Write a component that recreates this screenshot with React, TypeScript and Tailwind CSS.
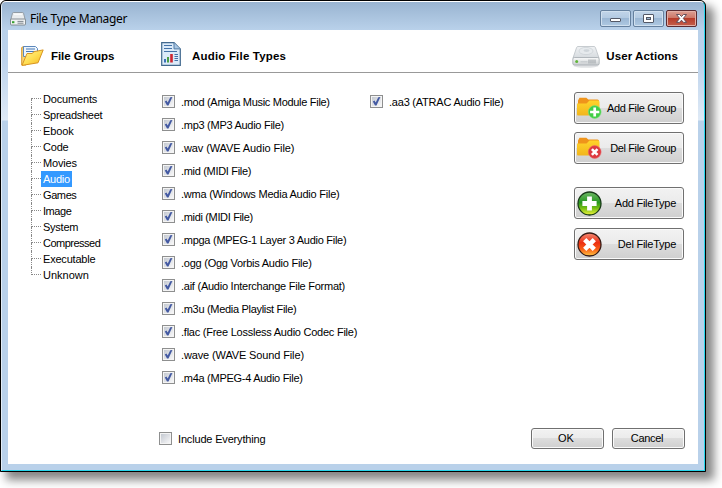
import React from "react";

const groups: [string, string][] = [
  ["Documents", "tracking-[-0.17px]"],
  ["Spreadsheet", "tracking-[-0.28px]"],
  ["Ebook", "tracking-[-0.1px]"],
  ["Code", "tracking-[-0.2px]"],
  ["Movies", "tracking-[-0.15px]"],
  ["Audio", "tracking-[-0.25px]"],
  ["Games", "tracking-[-0.4px]"],
  ["Image", "tracking-[-0.45px]"],
  ["System", "tracking-[-0.25px]"],
  ["Compressed", "tracking-[-0.5px]"],
  ["Executable", "tracking-[-0.2px]"],
  ["Unknown", "tracking-[0px]"],
];

const types: [string, string][] = [
  [".mod (Amiga Music Module File)", "tracking-[-0.3px]"],
  [".mp3 (MP3 Audio File)", "tracking-[-0.28px]"],
  [".wav (WAVE Audio File)", "tracking-[-0.1px]"],
  [".mid (MIDI File)", "tracking-[-0.32px]"],
  [".wma (Windows Media Audio File)", "tracking-[-0.23px]"],
  [".midi (MIDI File)", "tracking-[-0.34px]"],
  [".mpga (MPEG-1 Layer 3 Audio File)", "tracking-[-0.27px]"],
  [".ogg (Ogg Vorbis Audio File)", "tracking-[-0.25px]"],
  [".aif (Audio Interchange File Format)", "tracking-[-0.25px]"],
  [".m3u (Media Playlist File)", "tracking-[-0.31px]"],
  [".flac (Free Lossless Audio Codec File)", "tracking-[-0.24px]"],
  [".wave (WAVE Sound File)", "tracking-[-0.13px]"],
  [".m4a (MPEG-4 Audio File)", "tracking-[-0.28px]"],
];

function Check({ checked = true }: { checked?: boolean }) {
  return (
    <svg width="13" height="13" viewBox="0 0 13 13" className="shrink-0">
      <defs>
        <linearGradient id="box" x1="0" y1="0" x2="1" y2="1">
          <stop offset="0" stopColor="#c4c9d1" />
          <stop offset="1" stopColor="#f7f7f8" />
        </linearGradient>
      </defs>
      <rect x=".5" y=".5" width="12" height="12" fill="#f4f4f4" stroke="#8e8f8f" />
      <rect x="2" y="2" width="9" height="9" fill="url(#box)" />
      {checked && <path d="M2.8 6.4 4.5 5.5 5.7 7.5 8.3 2.3 10.4 2 6.5 10.5 5 10.5Z" fill="#4359a2" />}
    </svg>
  );
}

function TypeRow({ label, tracking }: { label: string; tracking: string }) {
  return (
    <div className="flex h-[23px] items-center">
      <Check />
      <span className={"ml-[6px] whitespace-nowrap pt-[2px] " + tracking}>{label}</span>
    </div>
  );
}

function SmallDrive() {
  return (
    <svg width="16" height="15" viewBox="0 0 16 15">
      <path d="M3.4 1.5h9.2q.7 0 .9.7L15.3 9H.7L2.5 2.2q.2-.7.9-.7Z" fill="#e9ecee" stroke="#8b949c" strokeWidth=".9" />
      <path d="M4 3.2h8" stroke="#fff" />
      <rect x=".5" y="8" width="15" height="6" rx="1" fill="#f0f2f3" stroke="#7b848b" strokeWidth=".9" />
      <rect x="2" y="10.2" width="2.4" height="2" fill="#35a02e" />
      <path d="M7.5 10.4h6M7.5 12.2h6" stroke="#7d868d" />
    </svg>
  );
}

function Drive() {
  return (
    <svg width="28" height="24" viewBox="0 0 28 24">
      <defs>
        <linearGradient id="driveTop" x1="0" y1="0" x2="0" y2="1">
          <stop offset="0" stopColor="#f0f2f4" />
          <stop offset="1" stopColor="#d6dbdf" />
        </linearGradient>
        <linearGradient id="driveFront" x1="0" y1="0" x2="0" y2="1">
          <stop offset="0" stopColor="#fafbfb" />
          <stop offset="1" stopColor="#c9cdd0" />
        </linearGradient>
      </defs>
      <ellipse cx="14" cy="20.8" rx="12.5" ry="2" fill="#e0e2e4" />
      <path d="M6 1.5h16q1 0 1.4 1L27 13H1L4.6 2.5Q5 1.5 6 1.5Z" fill="url(#driveTop)" stroke="#bac0c5" strokeWidth=".8" />
      <ellipse cx="14" cy="6" rx="7" ry="3.6" fill="#e6eaed" stroke="#c5cbd0" strokeWidth=".6" />
      <ellipse cx="14.5" cy="5.6" rx="3" ry="1.3" fill="#cfd5da" />
      <rect x=".8" y="12.5" width="26.4" height="7.5" rx="1.5" fill="url(#driveFront)" stroke="#a5abb0" strokeWidth=".8" />
      <circle cx="4.7" cy="16.5" r="1.5" fill="#62b53a" />
      <path d="M8.5 16.8h7" stroke="#b9bec1" strokeWidth=".8" />
      <path d="M17 14.5v4M19 14.5v4M21 14.5v4M23 14.5v4" stroke="#a1a7ab" strokeWidth="1.1" />
    </svg>
  );
}

function OpenFolder() {
  return (
    <svg width="23" height="22" viewBox="0 0 23 22">
      <defs>
        <linearGradient id="flap" x1="0" y1="0" x2="1" y2="1">
          <stop offset="0" stopColor="#fff2a0" />
          <stop offset=".5" stopColor="#ffdf55" />
          <stop offset="1" stopColor="#f5b51d" />
        </linearGradient>
      </defs>
      <path d="M.7 2.5 3 1.3 5 2.5V20H.7Z" fill="#fbd673" stroke="#d69732" />
      <path d="M2.5 1.5h12l2 2v8h-14z" fill="#edf5fc" stroke="#5c88bd" />
      <path d="M5 4h9M5 6.5h9" stroke="#4678b5" strokeWidth="1.2" />
      <path d="M1 20.4 6 8.5h5L13 6.7l9.2-1.8L17 17.8Z" fill="url(#flap)" stroke="#d99520" strokeLinejoin="round" />
    </svg>
  );
}

function Report() {
  return (
    <svg width="20" height="24" viewBox="0 0 20 24">
      <path d="M.7.7H13l6.3 6.2v16.4H.7Z" fill="#dcebf9" stroke="#42698e" strokeWidth="1.2" />
      <path d="M13 .7v6.2h6.3" fill="#a9c7e4" stroke="#557da5" />
      <path d="M3 3.5h8M3 6.5h8M3 9.5h13" stroke="#4472a8" strokeWidth="1.1" />
      <path d="M13.5 12.5H17M13.5 14.5H17M13.5 16.5H17M13.5 18.5H17" stroke="#4472a8" />
      <rect x="3" y="17" width="2" height="3.5" fill="#3b70b6" />
      <rect x="6" y="15" width="2" height="5.5" fill="#4a9e45" />
      <rect x="9.2" y="12" width="2.6" height="8.5" fill="#cf2731" />
    </svg>
  );
}

function FolderBadge({ del = false }: { del?: boolean }) {
  return (
    <svg width="25" height="24" viewBox="0 0 25 24" className="shrink-0">
      <defs>
        <linearGradient id="folder" x1="0" y1="0" x2="0" y2="1">
          <stop offset="0" stopColor="#ffd42b" />
          <stop offset="1" stopColor="#f2b51d" />
        </linearGradient>
      </defs>
      <path d="M1 4.5 2.5 1.7h6.8l2 1.8h9.2q1.5 0 1.5 1.5V12H1Z" fill="#ef941b" />
      <path d="M0 7.5h9.5l3-3H21q1.5 0 1.5 1.5v12.5q0 1-1 1H1q-1 0-1-1Z" fill="url(#folder)" />
      <circle cx="17.7" cy="16" r="6.4" fill={del ? "#dd3a40" : "#42cd46"} stroke={del ? "#ed686b" : "#7be37c"} strokeWidth=".6" />
      {del ? (
        <path d="m14.9 13.2 5.6 5.6m0-5.6-5.6 5.6" stroke="#fff" strokeWidth="2.6" />
      ) : (
        <path d="M17.7 11.4v9.2M13.1 16h9.2" stroke="#fff" strokeWidth="2.7" />
      )}
    </svg>
  );
}

function RoundBadge({ del = false }: { del?: boolean }) {
  return (
    <svg width="25" height="25" viewBox="0 0 25 25" className="shrink-0">
      <defs>
        <linearGradient id="greenBall" x1="0" y1="0" x2="0" y2="1">
          <stop offset="0" stopColor="#6fb968" />
          <stop offset=".45" stopColor="#269620" />
          <stop offset=".7" stopColor="#75bd12" />
          <stop offset="1" stopColor="#eff53d" />
        </linearGradient>
        <linearGradient id="redBall" x1="0" y1="0" x2="0" y2="1">
          <stop offset="0" stopColor="#f48b75" />
          <stop offset=".42" stopColor="#ec2f12" />
          <stop offset=".7" stopColor="#f85d16" />
          <stop offset="1" stopColor="#ffc442" />
        </linearGradient>
      </defs>
      <circle cx="12.5" cy="12.5" r="11.5" fill={del ? "url(#redBall)" : "url(#greenBall)"} stroke={del ? "#361b16" : "#183a19"} strokeWidth="1.3" />
      {del ? (
        <path d="m7.7 7.7 9.6 9.6m0-9.6-9.6 9.6" stroke="#fff" strokeWidth="4.6" />
      ) : (
        <path d="M12.5 5.4v14.2M5.4 12.5h14.2" stroke="#fff" strokeWidth="4.8" />
      )}
    </svg>
  );
}

const buttonFace =
  "rounded-[3px] border border-[#707070] bg-[linear-gradient(#f2f2f2_0%,#ebebeb_49%,#dddddd_50%,#cfcfcf_100%)] shadow-[inset_0_0_0_1px_#fafafa]";

function ActionButton({ label, icon, text }: { label: string; icon: React.ReactNode; text: string }) {
  return (
    <button className={"flex h-8 w-[110px] items-center justify-between pl-[2px] pr-[7px] " + buttonFace}>
      {icon}
      <span className={"whitespace-nowrap " + text}>{label}</span>
    </button>
  );
}

function Caption({ kind }: { kind: "min" | "max" | "close" }) {
  const face =
    kind === "close"
      ? "border-[#5b2b31] bg-[linear-gradient(#dca094_0%,#ce7767_46%,#b73c2a_50%,#c4604c_100%)] shadow-[inset_0_0_0_1px_#e3afa5]"
      : "border-[#65809e] bg-[linear-gradient(#c2d5e9_0%,#b3cae2_46%,#9bb7d4_50%,#afc9e2_100%)] shadow-[inset_0_0_0_1px_#d0e0ef]";
  return (
    <div className={"flex h-[17px] w-[31px] items-center justify-center rounded-[2px] border " + face}>
      <svg width="13" height="11" viewBox="0 0 13 11">
        {kind === "min" && <rect x="1.5" y="5.5" width="10" height="3" rx=".5" fill="#fff" stroke="#535866" />}
        {kind === "max" && (
          <>
            <rect x="1.5" y="1.5" width="10" height="8" rx=".5" fill="#fff" stroke="#535866" />
            <rect x="4.5" y="4.5" width="4" height="2" fill="#9eb8d2" stroke="#535866" />
          </>
        )}
        {kind === "close" && (
          <path d="M1.5 1.5h3l2 2 2-2h3L8.3 5.4l3.2 4h-3l-2-2.2-2 2.2h-3l3.2-4Z" fill="#fff" stroke="#554554" strokeWidth=".9" />
        )}
      </svg>
    </div>
  );
}

export default function App() {
  return (
    <div className="h-[488px] w-[722px] overflow-hidden bg-white font-['Liberation_Sans',Arial,sans-serif] text-[11px] leading-[13px] text-black">
      <div className="h-[472px] w-[706px] rounded-t-[6px] border border-black bg-black shadow-[7px_7px_10px_1px_rgba(0,0,0,0.48)]">
        <div className="h-[470px] w-[704px] rounded-t-[5px] border border-t-white border-r-[#27d6ed] border-b-[#27d6ed] border-l-[#e3edf7] bg-[linear-gradient(#99b4d1_0px,#b9d1ea_28px,#bdd3ec_60px,#dfeaf6_118px,#b9d1ea_119px)] px-[6px] pb-[6px]">
          <header className="flex h-7 items-center justify-between">
            <div className="flex items-center pl-[2px] pt-[5px]">
              <SmallDrive />
              <span className="ml-[4px] font-['Noto_Sans',sans-serif] text-[12px] leading-[16px] tracking-[-0.35px]">File Type Manager</span>
            </div>
            <div className="flex gap-[2px] pt-[5px] pr-[1px]">
              <Caption kind="min" />
              <Caption kind="max" />
              <Caption kind="close" />
            </div>
          </header>
          <main className="flex h-[434px] w-[690px] flex-col bg-white">
            <div className="flex h-[43px] shrink-0 items-start border-b border-[#999] text-[11.5px] font-bold">
              <div className="flex w-[153px] items-center pl-[13px] pt-[15px]">
                <OpenFolder />
                <span className="ml-[7px] tracking-[-0.05px]">File Groups</span>
              </div>
              <div className="flex items-center pt-[12px]">
                <Report />
                <span className="ml-[11px] mt-[4px] tracking-[0.19px]">Audio File Types</span>
              </div>
              <div className="ml-auto flex items-center pr-[20px] pt-[15px]">
                <Drive />
                <span className="ml-[6px] pb-[2px] tracking-[0.1px]">User Actions</span>
              </div>
            </div>
            <div className="flex h-[316px] shrink-0">
              <nav className="w-[154px] pl-[23px] pt-[18px]">
                {groups.map(([name, tracking], i) => (
                  <div key={name} className="flex h-4 items-center">
                    <div className="flex h-4 w-[10px] flex-col">
                      <div className={i === 0 ? "h-2 border-b border-dotted border-[#888]" : "h-2 border-b border-l border-dotted border-[#888]"} />
                      {i < groups.length - 1 && <div className="h-2 border-l border-dotted border-[#888]" />}
                    </div>
                    <span className={"flex h-4 items-center pl-[2px] pr-[2px] " + tracking + (name === "Audio" ? " bg-[#3399ff] text-white" : "")}>{name}</span>
                  </div>
                ))}
              </nav>
              <section className="w-[208px] pt-[17px]">
                {types.map(([label, tracking]) => (
                  <TypeRow key={label} label={label} tracking={tracking} />
                ))}
              </section>
              <section className="w-[204px] pt-[17px]">
                <TypeRow label=".aa3 (ATRAC Audio File)" tracking="tracking-[-0.22px]" />
              </section>
              <aside className="flex w-[110px] shrink-0 flex-col pt-[19px]">
                <ActionButton label="Add File Group" icon={<FolderBadge />} text="tracking-[-0.36px]" />
                <div className="h-2" />
                <ActionButton label="Del File Group" icon={<FolderBadge del />} text="tracking-[-0.36px]" />
                <div className="h-[23px]" />
                <ActionButton label="Add FileType" icon={<RoundBadge />} text="tracking-[-0.25px]" />
                <div className="h-[9px]" />
                <ActionButton label="Del FileType" icon={<RoundBadge del />} text="tracking-[-0.25px]" />
              </aside>
            </div>
            <footer className="flex items-center pl-[151px] pt-[39px]">
              <Check checked={false} />
              <span className="ml-[6px] pt-px tracking-[-0.17px]">Include Everything</span>
              <div className="ml-auto flex gap-2 pr-[13px]">
                <button className={"h-[21px] w-[73px] pr-[3px] " + buttonFace}>OK</button>
                <button className={"h-[21px] w-[73px] pr-[3px] tracking-[-0.3px] " + buttonFace}>Cancel</button>
              </div>
            </footer>
          </main>
        </div>
      </div>
    </div>
  );
}
